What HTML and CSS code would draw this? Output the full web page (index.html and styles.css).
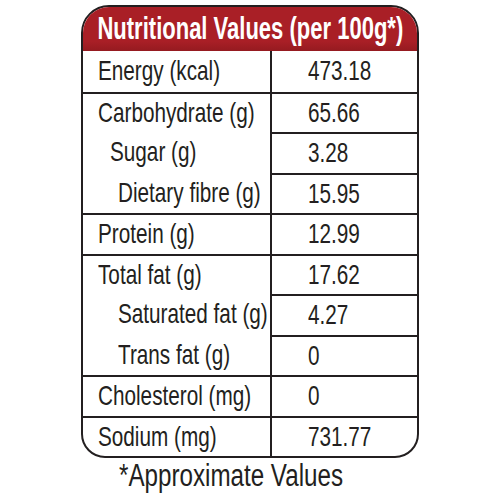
FILE: index.html
```html
<!DOCTYPE html>
<html lang="en">
<head>
    <meta charset="UTF-8">
    <meta name="viewport" content="width=device-width, initial-scale=1.0">
    <title>Nutritional Values</title>
    <link rel="stylesheet" href="styles.css">
</head>
<body>
    <div class="panel">
        <div class="card">
            <div class="card-title"><span class="narrow">Nutritional Values (per 100g*)</span></div>

            <div class="row">
                <div class="label"><span class="narrow">Energy (kcal)</span></div>
                <div class="value"><span class="narrow">473.18</span></div>
            </div>
            <div class="row">
                <div class="label"><span class="narrow">Carbohydrate (g)</span></div>
                <div class="value"><span class="narrow">65.66</span></div>
            </div>
            <div class="row sub">
                <div class="label indent-1"><span class="narrow">Sugar (g)</span></div>
                <div class="value"><span class="narrow">3.28</span></div>
            </div>
            <div class="row sub">
                <div class="label indent-2"><span class="narrow">Dietary fibre (g)</span></div>
                <div class="value"><span class="narrow">15.95</span></div>
            </div>
            <div class="row">
                <div class="label"><span class="narrow">Protein (g)</span></div>
                <div class="value"><span class="narrow">12.99</span></div>
            </div>
            <div class="row">
                <div class="label"><span class="narrow">Total fat (g)</span></div>
                <div class="value"><span class="narrow">17.62</span></div>
            </div>
            <div class="row sub">
                <div class="label indent-2"><span class="narrow">Saturated fat (g)</span></div>
                <div class="value"><span class="narrow">4.27</span></div>
            </div>
            <div class="row sub">
                <div class="label indent-2"><span class="narrow">Trans fat (g)</span></div>
                <div class="value"><span class="narrow">0</span></div>
            </div>
            <div class="row">
                <div class="label"><span class="narrow">Cholesterol (mg)</span></div>
                <div class="value"><span class="narrow">0</span></div>
            </div>
            <div class="row">
                <div class="label"><span class="narrow">Sodium (mg)</span></div>
                <div class="value"><span class="narrow">731.77</span></div>
            </div>
        </div>
        <div class="note"><span class="narrow">*Approximate Values</span></div>
    </div>
</body>
</html>
```

FILE: styles.css
```css
:root {
    --ink: #231f20;
}

body {
    margin: 0;
    padding: 0;
    background: #ffffff;
    font-family: 'Liberation Sans', Arial, sans-serif;
    color: var(--ink);
}

/* condensed look: no narrow face is installed */
.narrow {
    display: inline-block;
    white-space: nowrap;
    transform: scaleX(0.74);
    transform-origin: left center;
}

.panel {
    width: 338px;
    margin: 0 auto;
    padding-top: 5px;
}

.card {
    border: 2px solid var(--ink);
    border-radius: 28px 28px 24px 24px;
    overflow: hidden;
}

.card-title {
    display: flex;
    justify-content: center;
    height: 44px;
    background: linear-gradient(#a91f26 78%, #951a20);
    color: #ffffff;
    font-weight: bold;
    font-size: 31px;
    line-height: 44px;
}

.card-title .narrow {
    transform: scaleX(0.71);
    transform-origin: center center;
}

.row {
    display: grid;
    grid-template-columns: 189px 1fr;
    height: 40.5px;
    box-sizing: border-box;
    border-top: 2px solid var(--ink);
    font-size: 28px;
}

.card-title + .row {
    border-top: none;
}

.row.sub {
    border-top: none;
}

.row.sub .value {
    border-top: 2px solid var(--ink);
}

.label {
    display: flex;
    align-items: center;
    padding-left: 15px;
    border-right: 2px solid var(--ink);
    overflow: visible;
    min-width: 0;
}

.indent-1 {
    padding-left: 27px;
}

.indent-2 {
    padding-left: 35px;
}

.value {
    display: flex;
    align-items: center;
    padding-left: 36px;
    min-width: 0;
}

.note {
    padding-left: 38px;
    padding-top: 1px;
    font-size: 31px;
    line-height: 34px;
}

.note .narrow {
    transform: scaleX(0.78);
}
```
